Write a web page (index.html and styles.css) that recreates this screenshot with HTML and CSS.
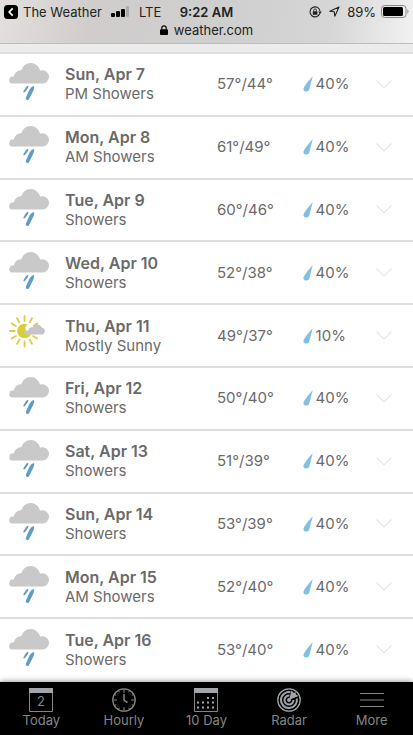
FILE: index.html
```html
<!DOCTYPE html>
<html lang="en">
<head>
  <meta charset="UTF-8" />
  <title>10 Day Weather</title>
  <meta name="viewport" content="width=device-width, initial-scale=1.0">
  <link rel="stylesheet" href="styles.css">
</head>
<body>
  <!-- shared icons -->
  <svg class="sprite" aria-hidden="true">
    <symbol id="showers" viewBox="0 0 40 42">
      <path fill="#c9c9c9" d="M3 20.500A3 3 0 0 1 .6 16C.6 14 2.500 13.500 4.800 13.600A7 7 0 0 1 12.300 7.300 9.600 9.600 0 0 1 31 7.600a6.700 6.700 0 0 1 9 6.200 6.600 6.600 0 0 1-6.500 6.700z"/>
      <path fill="#5f9dc6" d="M25 23q.7 1.600-.6 4.400l-4 8c-1.200 2.600-4.400 1.800-3.400-1.200l3.600-7.800Q22.300 23.200 25 23zM19.300 22.800q.4 1-.7 2.800l-2.200 3c-1.200 1.600-2.700.9-1.700-.9l2-3.200q1-1.400 2.600-1.700z"/>
    </symbol>
    <symbol id="sunny" viewBox="0 0 40 42">
      <g stroke="#d6cf3b" stroke-width="1.800" stroke-linecap="round">
        <path d="M15.500 1v5M15.500 26.500v5M.8 16h5M8 3.200l2.300 4.200M2.700 8.500l4.200 2.500M2.700 23.500L6.900 21M8 28.800l2.300-4.200M23 3.200l-2.300 4.200M28.300 8.500L24.100 11M28.300 23.500L24.100 21M23 28.800l-2.300-4.200"/>
      </g>
      <circle cx="15.500" cy="16" r="7.300" fill="#d6cf3b"/>
      <circle cx="20.500" cy="13" r="4" fill="#fff"/>
      <path fill="#c6c4c9" d="M16.500 19.600c-1.700-1-1.200-3.800 1.500-4.200h1.500a3.600 3.600 0 0 1 4-3.200 5.300 5.300 0 0 1 9.400.2 3.900 3.900 0 0 1 1 7.200z"/>
    </symbol>
    <symbol id="drop" viewBox="0 0 10 16">
      <path fill="#82bfe0" d="M9.700.2L6.200 13.800C5.500 16.300-.3 16.200.5 12.600 1 10.500 6 4 9.700.2z"/>
    </symbol>
    <symbol id="chevron" viewBox="0 0 16 9">
      <path fill="none" stroke="#e6e6e6" stroke-width="1.100" d="M.5.500L8 8 15.500.500"/>
    </symbol>
  </svg>

  <header class="browser-bar">
    <div class="status">
      <div class="status-left">
        <svg class="back" viewBox="0 0 14 14"><rect width="14" height="14" rx="3.500"/><path d="M8.700 3.300L5.200 7l3.500 3.700" fill="none" stroke="#fff" stroke-width="1.700"/></svg>
        <span>The Weather</span>
        <svg class="signal" viewBox="0 0 18 11"><rect y="7" width="4" height="4" rx="1"/><rect x="5" y="5" width="4" height="6" rx="1"/><rect x="10" y="3" width="4" height="8" rx="1"/><rect x="15" width="3" height="11" rx="1" fill="#aaa"/></svg>
        <span>LTE</span>
      </div>
      <div class="clock">9:22 AM</div>
      <div class="status-right">
        <svg class="lock-rotate" viewBox="0 0 13 12"><path d="M10.800 7.500A5 5 0 1 1 11 5" fill="none" stroke="#222" stroke-width="1.100"/><path d="M9.200 5.500h3.600L11 8z" fill="#222"/><rect x="3.800" y="5.200" width="4.600" height="3.500" rx=".5" fill="#222"/><path d="M4.700 5.500V4.300a1.400 1.400 0 0 1 2.800 0v1.200" fill="none" stroke="#222" stroke-width=".9"/></svg>
        <svg class="arrow" viewBox="0 0 11 11"><path d="M10 1L.8 5.200l4.400.6.600 4.400z" fill="none" stroke="#222" stroke-width="1.100" stroke-linejoin="round"/></svg>
        <span>89%</span>
        <svg class="battery" viewBox="0 0 28 13"><rect x=".5" y=".5" width="24.500" height="12" rx="3" fill="none" stroke="#888"/><rect x="2" y="2" width="20" height="9" rx="1.500"/><path d="M26.300 4.300q2.500 2.200 0 4.400z" fill="#999"/></svg>
      </div>
    </div>
    <div class="address">
      <svg class="lock" viewBox="0 0 8 10"><rect y="4.200" width="8" height="5.800" rx="1"/><path d="M1.800 5V3a2.200 2.200 0 0 1 4.400 0v2" fill="none" stroke="#111" stroke-width="1.200"/></svg>
      <span>weather.com</span>
    </div>
  </header>

  <main class="forecast" id="forecast"></main>

  <nav class="tabs">
    <a class="tab" href="#today">
      <svg viewBox="0 0 24 24"><path d="M.5.500h23v23H.5z" fill="none" stroke="currentColor"/><path d="M0 0h24v5H0z" fill="#a2a5a9"/><text x="12" y="18" class="day">2</text></svg>
      <span>Today</span>
    </a>
    <a class="tab" href="#hourly">
      <svg viewBox="0 0 24 24" fill="none" stroke="currentColor"><circle cx="12" cy="12" r="11.200" stroke-width="1.300"/><path d="M12 1v4M12 19v4M1 12h4M19 12h4M6.500 2.500l1 1.700M17.500 2.500l-1 1.700M6.500 21.500l1-1.700M17.500 21.500l-1-1.700M2.500 6.500l1.700 1M2.500 17.500l1.700-1M21.500 6.500l-1.700 1M21.500 17.500l-1.700-1"/><path d="M12 6v6.200l3.500 2.300" stroke-width="1.500"/></svg>
      <span>Hourly</span>
    </a>
    <a class="tab" href="#forecast">
      <svg viewBox="0 0 24 24"><path d="M.5.500h23v23H.5z" fill="none" stroke="currentColor"/><path d="M0 0h24v5H0z" fill="#a2a5a9"/><path d="M13 10h8M3 14.500h18M3 19.500h18" stroke="#a2a5a9" stroke-width="2" stroke-dasharray="2 3"/></svg>
      <span>10 Day</span>
    </a>
    <a class="tab" href="#radar">
      <svg viewBox="0 0 24 24" fill="none" stroke="#a2a5a9"><circle cx="12" cy="12" r="11.200" stroke-width="1.300"/><path d="M13.500 4.200A8 8 0 1 0 19.800 10.500" stroke-width="2"/><path d="M12.500 7.600A4.500 4.500 0 1 0 16.500 12" stroke-width="2"/><path d="M12 12L14.500 2.500 17 5l1.500-1 .5 2.500 2.500 1.500z" fill="#a2a5a9" stroke="none"/><circle cx="12" cy="12" r="2" fill="#a2a5a9" stroke="none"/></svg>
      <span>Radar</span>
    </a>
    <a class="tab" href="#more">
      <svg viewBox="0 0 24 24"><path d="M0 5.500h24M0 12h24M0 18.500h24" stroke="currentColor" stroke-width="1.200"/></svg>
      <span>More</span>
    </a>
  </nav>

  <script src="script.js"></script>
</body>
</html>
```

FILE: styles.css
```css
:root {
  --text: #6a6a6a;
  --line: #dedede;
  --tab: #858585;
}

* { box-sizing: border-box; }

body {
  font-family: Inter, 'Liberation Sans', sans-serif;
  margin: 0;
  min-height: 100vh;
  display: flex;
  flex-direction: column;
  background: #ececec;
  color: var(--text);
}

svg {
  display: block;
  flex: none;
}

.sprite {
  position: absolute;
  width: 0;
  height: 0;
}

/* browser chrome */
.browser-bar {
  padding-top: 2px;
  height: 44px;
  margin-bottom: 8px;
  border-bottom: 1px solid #bdbdbd;
  background: linear-gradient(100deg, #e2dfde 0%, #d0cdcc 22%, #cfcfcf 55%, #d6d6d6 80%, #f2f2f2 100%);
  color: #222;
  font-size: 13px;
}

.status {
  display: grid;
  grid-template-columns: 1fr auto 1fr;
  align-items: center;
  height: 19px;
  padding: 0 4px;
}

.status-left,
.status-right {
  display: flex;
  align-items: center;
  gap: 5px;
}

.status-right {
  justify-content: flex-end;
}

.clock {
  font-weight: 600;
}

.back {
  width: 14px;
  height: 14px;
}

.signal {
  width: 18px;
  height: 11px;
  margin: 0 5px 0 4px;
}

.lock-rotate {
  width: 13px;
  height: 12px;
  margin-right: 2px;
}

.arrow {
  width: 11px;
  height: 11px;
  margin-right: 2px;
}

.battery {
  width: 28px;
  height: 13px;
}

.address {
  display: flex;
  align-items: center;
  justify-content: center;
  gap: 6px;
  height: 18px;
}

.lock {
  width: 8px;
  height: 10px;
}

/* daily list */
.forecast {
  flex: 1;
  display: flex;
  flex-direction: column;
  padding-bottom: 2px;
  background: #fff;
}

.row {
  flex: 1;
  display: grid;
  grid-template-columns: 17fr 7fr 6fr auto;
  align-items: center;
  min-height: 62px;
  padding: 0 21px 0 9px;
  border-top: 2px solid var(--line);
  font-size: 15px;
  line-height: 20px;
}

.day-cell {
  display: flex;
  align-items: center;
  gap: 16px;
}

.sky {
  width: 40px;
  height: 42px;
}

.date {
  margin: 0;
  font-size: 16px;
  font-weight: 600;
}

.phrase {
  margin: 0;
}

.precip {
  display: flex;
  align-items: center;
  gap: 3px;
}

.drop {
  width: 10px;
  height: 16px;
}

.expand {
  padding: 0;
  border: 0;
  background: none;
  cursor: pointer;
}

.chevron {
  width: 16px;
  height: 9px;
}

/* bottom navigation */
.tabs {
  position: sticky;
  bottom: 0;
  display: flex;
  height: 53px;
  background: #000;
  box-shadow: 0 0 6px rgba(0, 0, 0, 0.5);
}

.tab {
  flex: 1;
  display: flex;
  flex-direction: column;
  align-items: center;
  padding-top: 6px;
  color: var(--tab);
  font-size: 13px;
  line-height: 16px;
  text-decoration: none;
}

.tab svg {
  width: 24px;
  height: 24px;
}

.day {
  fill: currentColor;
  font-size: 13px;
  text-anchor: middle;
}
```

FILE: script.js
```js
const days = [
  ['Sun, Apr 7', 'PM Showers', '57°/44°', '40%'],
  ['Mon, Apr 8', 'AM Showers', '61°/49°', '40%'],
  ['Tue, Apr 9', 'Showers', '60°/46°', '40%'],
  ['Wed, Apr 10', 'Showers', '52°/38°', '40%'],
  ['Thu, Apr 11', 'Mostly Sunny', '49°/37°', '10%'],
  ['Fri, Apr 12', 'Showers', '50°/40°', '40%'],
  ['Sat, Apr 13', 'Showers', '51°/39°', '40%'],
  ['Sun, Apr 14', 'Showers', '53°/39°', '40%'],
  ['Mon, Apr 15', 'AM Showers', '52°/40°', '40%'],
  ['Tue, Apr 16', 'Showers', '53°/40°', '40%']
];

document.getElementById('forecast').innerHTML = days.map(([date, phrase, temps, rain]) => `
  <article class="row">
    <div class="day-cell">
      <svg class="sky"><use href="#${phrase.includes('Sunny') ? 'sunny' : 'showers'}"/></svg>
      <div>
        <h2 class="date">${date}</h2>
        <p class="phrase">${phrase}</p>
      </div>
    </div>
    <div class="temps">${temps}</div>
    <div class="precip"><svg class="drop"><use href="#drop"/></svg>${rain}</div>
    <button class="expand" aria-label="Details for ${date}"><svg class="chevron"><use href="#chevron"/></svg></button>
  </article>
`).join('');
```
